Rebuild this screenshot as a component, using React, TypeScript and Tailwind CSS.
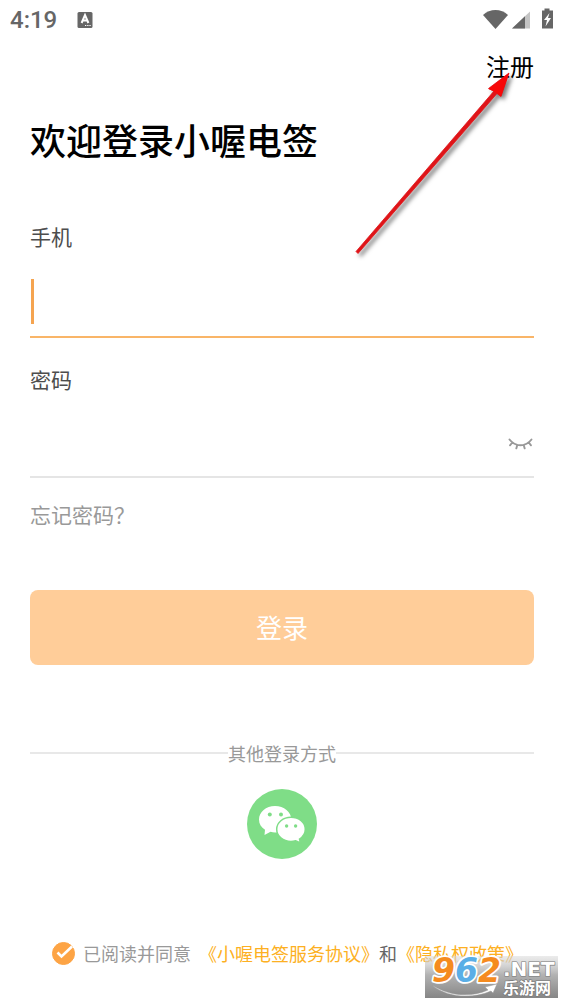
import { useState } from "react";

function StatusBar() {
  return (
    <header className="flex h-10 items-center justify-between px-[10px] text-[#666]">
      <div className="flex items-center gap-5">
        <span className="font-[Roboto,sans-serif] text-2xl leading-10 font-medium">4:19</span>
        <svg width="16" height="18" viewBox="0 0 16 18" aria-hidden="true">
          <rect x="0.5" y="1" width="15" height="16" rx="1.5" fill="#666" />
          <path d="M4.6 12 8 4l3.4 8M5.8 9.6h4.4" fill="none" stroke="#fff" strokeWidth="2" />
          <path d="M8 14.5h1.3M10.2 14.5h1.3M12.4 14.5h1.3" stroke="#fff" strokeWidth="1.2" />
        </svg>
      </div>
      <svg width="72" height="24" viewBox="0 0 72 24" aria-hidden="true">
        <path d="M1 7C4.500 3.800 9 2 13.500 2s9 1.800 12.500 5L13.500 21z" fill="#666" />
        <path d="M30 20.500 48 3.500V20.500z" fill="#c4c4c4" />
        <path d="M30 20.500 43 8.200V20.500z" fill="#666" />
        <path d="M60 2.500h2.500V0.500h5v2H71V20.500H60z" fill="#666" />
        <path d="M67.500 5 62 12h3l-1.500 6.500L69 10h-3z" fill="#fff" />
      </svg>
    </header>
  );
}

function ClosedEyeIcon() {
  return (
    <svg width="26" height="14" viewBox="0 0 26 14" fill="none" stroke="#999" strokeWidth="1.900" strokeLinecap="round" aria-hidden="true">
      <path d="M1.500 2.500C4 5.800 8 8.200 12.500 8.200s8.500-2.400 11-5.700M4.300 5.500 2 8.300M9.300 8l-1 3.400M15.700 8l1 3.400M20.800 5.500l2.200 2.800" />
    </svg>
  );
}

function WechatIcon() {
  return (
    <svg width="70" height="70" viewBox="0 0 70 70" aria-hidden="true">
      <circle cx="35" cy="35" r="35" fill="#7fdd87" />
      <path
        d="M28 17c-9 0-16 5.900-16 13.500 0 4.400 2.300 7.900 6 10.300L17.500 46l6-3.200c1.500.500 2.900.800 4.500.800 9 0 16.300-5.800 16.300-13.200S37 17 28 17z"
        fill="#fff"
      />
      <path
        d="M44 28.300c-8 0-14.300 5.300-14.300 12S36 52.500 44 52.500c1.600 0 3.200-.300 4.700-.700L53.500 54l-1-3.900c3.500-2.300 5.800-5.700 5.800-9.800 0-6.700-6.300-12-14.300-12z"
        fill="#fff"
        stroke="#7fdd87"
        strokeWidth="1.500"
      />
      <g fill="#7fdd87">
        <circle cx="22.800" cy="25.500" r="2" />
        <circle cx="34" cy="25.500" r="2" />
        <circle cx="39.600" cy="37" r="1.700" />
        <circle cx="48.600" cy="37" r="1.700" />
      </g>
    </svg>
  );
}

function Arrow() {
  return (
    <svg
      className="pointer-events-none absolute top-[60px] right-[40px] drop-shadow-[3px_3px_2px_rgba(0,0,0,0.5)]"
      width="180"
      height="200"
      viewBox="0 0 180 200"
      aria-hidden="true"
    >
      <path d="M165 13 144.500 28.500 150 31 12 191.500 14 193.500 153 33.500 157 36.500z" fill="#df1418" stroke="#df1418" strokeWidth="0.800" />
      <path d="M165 13 144.500 29 150 31.500 153 33.500 157 36.500z" fill="#f70808" />
    </svg>
  );
}

function SiteMark() {
  return (
    <svg className="pointer-events-none absolute right-[6px] bottom-[6px]" width="133" height="46" viewBox="0 0 133 46">
      <defs>
        <linearGradient id="plate" x1="0" y1="0" x2="0" y2="1">
          <stop offset="0" stopColor="#d8d8d8" stopOpacity="0.500" />
          <stop offset="0.450" stopColor="#b2b2b2" />
          <stop offset="1" stopColor="#868686" />
        </linearGradient>
      </defs>
      <rect y="4" width="133" height="42" fill="url(#plate)" />
      <g
        fontFamily="DejaVu Sans, sans-serif"
        fontWeight="700"
        fontStyle="italic"
        fontSize="33"
        strokeLinejoin="round"
      >
        <g fill="#fff" stroke="#fff" strokeWidth="3.500" paintOrder="stroke">
          <text x="7" y="30">
            <tspan fill="#f58b1f">9</tspan>
            <tspan fill="#5aaee6">6</tspan>
            <tspan fill="#f58b1f">2</tspan>
          </text>
        </g>
      </g>
      <path d="M7 33C24 44 45 46 63 38l-3-3 12-3-4 9-2-2C48 47 22 46 7 33z" fill="#fff" stroke="#999" strokeWidth="0.500" />
      <g fill="#fff" stroke="#777" strokeWidth="1.200" paintOrder="stroke">
        <text x="78" y="24" fontFamily="DejaVu Sans, sans-serif" fontSize="20" fontWeight="700">.NET</text>
        <text x="78" y="42" fontFamily="Noto Sans CJK SC, sans-serif" fontSize="16" fontWeight="700">乐游网</text>
      </g>
    </svg>
  );
}

export default function App() {
  const [agreed, setAgreed] = useState(true);

  return (
    <div className="relative min-h-screen bg-white pb-8 font-['Noto_Sans_CJK_SC',sans-serif] text-black">
      <StatusBar />
      <main className="px-[30px]">
        <nav className="flex h-[52px] items-center justify-end">
          <a href="#register" className="text-2xl">注册</a>
        </nav>
        <h1 className="mt-5 text-4xl leading-[54px] font-medium">欢迎登录小喔电签</h1>

        <form onSubmit={(e) => e.preventDefault()}>
          <label htmlFor="phone" className="mt-[54px] block text-[21px] leading-8 text-[#4d4d4d]">手机</label>
          <div className="flex h-[86px] items-center border-b-2 border-[#f9b568] pt-[14px]">
            <span className="ml-px h-[45px] w-[3px] bg-[#f5a450]" />
            <input id="phone" type="tel" className="h-[45px] min-w-0 flex-1 bg-transparent px-1 text-2xl outline-none" />
          </div>

          <label htmlFor="password" className="mt-[25px] block text-[21px] leading-8 text-[#4d4d4d]">密码</label>
          <div className="flex h-[83px] items-center border-b-2 border-[#e5e5e5]">
            <input id="password" type="password" className="h-[45px] min-w-0 flex-1 bg-transparent text-2xl outline-none" />
            <button type="button" aria-label="显示密码" className="pt-4">
              <ClosedEyeIcon />
            </button>
          </div>

          <a href="#forgot" className="mt-5 block w-fit text-[21px] leading-8 text-[#999]">忘记密码？</a>

          <button type="submit" className="mt-[60px] h-[75px] w-full rounded-lg bg-[#ffcd99] pb-[2px] text-[26px] text-white">
            登录
          </button>
        </form>

        <div className="mt-[74px] flex items-center text-lg leading-7 text-[#999]">
          <span className="h-[2px] flex-1 bg-[#e8e8e8]" />
          其他登录方式
          <span className="h-[2px] flex-1 bg-[#e8e8e8]" />
        </div>

        <button type="button" aria-label="微信登录" className="mx-auto mt-[22px] block rounded-full">
          <WechatIcon />
        </button>

        <div className="mt-20 flex items-center justify-center pl-[10px] text-lg leading-7 whitespace-nowrap text-[#999]">
          <label className="flex items-center gap-2">
            <span className="grid size-6 place-items-center">
              <input
                type="checkbox"
                checked={agreed}
                onChange={(e) => setAgreed(e.target.checked)}
                className="col-start-1 row-start-1 size-[23px] appearance-none rounded-full border border-[#fda445] checked:bg-[#fda445]"
              />
              <svg className="pointer-events-none col-start-1 row-start-1" width="24" height="24" viewBox="0 0 24 24" fill="none" aria-hidden="true">
                <path d="M6.500 11.500 10.500 15.500 21 5.500" stroke="#fff" strokeWidth="2.600" />
              </svg>
            </span>
            已阅读并同意
          </label>
          <a href="#service" className="ml-2 text-[#fdb022]">《小喔电签服务协议》</a>
          <span className="text-[#666]">和</span>
          <a href="#privacy" className="text-[#fdb022]">《隐私权政策》</a>
        </div>
      </main>
      <Arrow />
      <SiteMark />
    </div>
  );
}
